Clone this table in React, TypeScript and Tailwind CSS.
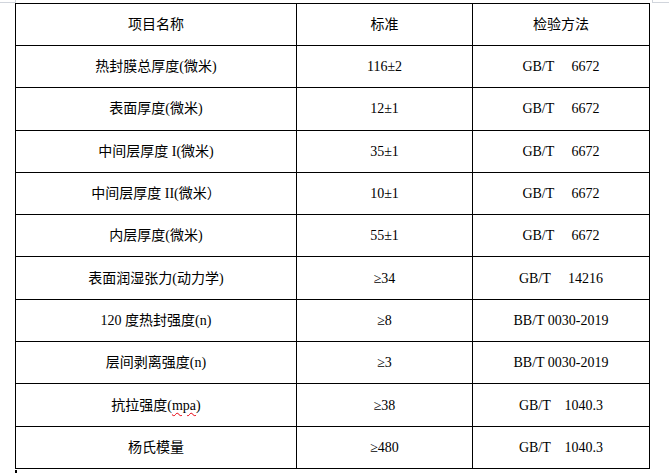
import React from 'react';

type Row = { name: React.ReactNode; std: string; method: string };

const rows: Row[] = [
  { name: '热封膜总厚度(微米)', std: '116±2', method: 'GB/T     6672' },
  { name: '表面厚度(微米)', std: '12±1', method: 'GB/T     6672' },
  { name: '中间层厚度 I(微米)', std: '35±1', method: 'GB/T     6672' },
  { name: '中间层厚度 II(微米）', std: '10±1', method: 'GB/T     6672' },
  { name: '内层厚度(微米)', std: '55±1', method: 'GB/T     6672' },
  { name: '表面润湿张力(动力学)', std: '≥34', method: 'GB/T     14216' },
  { name: '120 度热封强度(n)', std: '≥8', method: 'BB/T 0030-2019' },
  { name: '层间剥离强度(n)', std: '≥3', method: 'BB/T 0030-2019' },
  {
    name: (
      <>
        抗拉强度(
        <span className="underline decoration-wavy decoration-red-600 decoration-1 underline-offset-2">mpa</span>)
      </>
    ),
    std: '≥38',
    method: 'GB/T    1040.3',
  },
  { name: '杨氏模量', std: '≥480', method: 'GB/T    1040.3' },
];

const cell = 'border border-black text-center align-middle p-0 whitespace-pre';

export default function App() {
  return (
    <div
      className="relative w-[669px] h-[473px] bg-white overflow-hidden text-black text-[14px]"
      style={{ fontFamily: '"Liberation Serif", "Noto Sans CJK SC", serif' }}
    >
      {/* page corner marks */}
      <div className="absolute left-0 top-[2px] w-[15px] h-px bg-gray-300" />
      <div className="absolute left-[15px] top-0 w-px h-[3px] bg-gray-300" />
      <div className="absolute left-[652px] top-[2px] w-[17px] h-px bg-gray-300" />
      <div className="absolute left-[652px] top-0 w-px h-[3px] bg-gray-300" />

      <div className="pt-[3px] pl-[15px]">
        <table className="border-collapse table-fixed w-[634px]">
          <colgroup>
            <col className="w-[281px]" />
            <col className="w-[176px]" />
            <col className="w-[177px]" />
          </colgroup>
          <tbody>
            <tr className="h-[42px]">
              <td className={cell}>项目名称</td>
              <td className={cell}>标准</td>
              <td className={cell}>检验方法</td>
            </tr>
            {rows.map((r, i) => (
              <tr key={i} className="h-[42.3px]">
                <td className={cell}>{r.name}</td>
                <td className={cell}>{r.std}</td>
                <td className={cell}>{r.method}</td>
              </tr>
            ))}
          </tbody>
        </table>
        <div className="w-[2px] h-[4px] bg-black mt-[1px]" />
      </div>
    </div>
  );
}
